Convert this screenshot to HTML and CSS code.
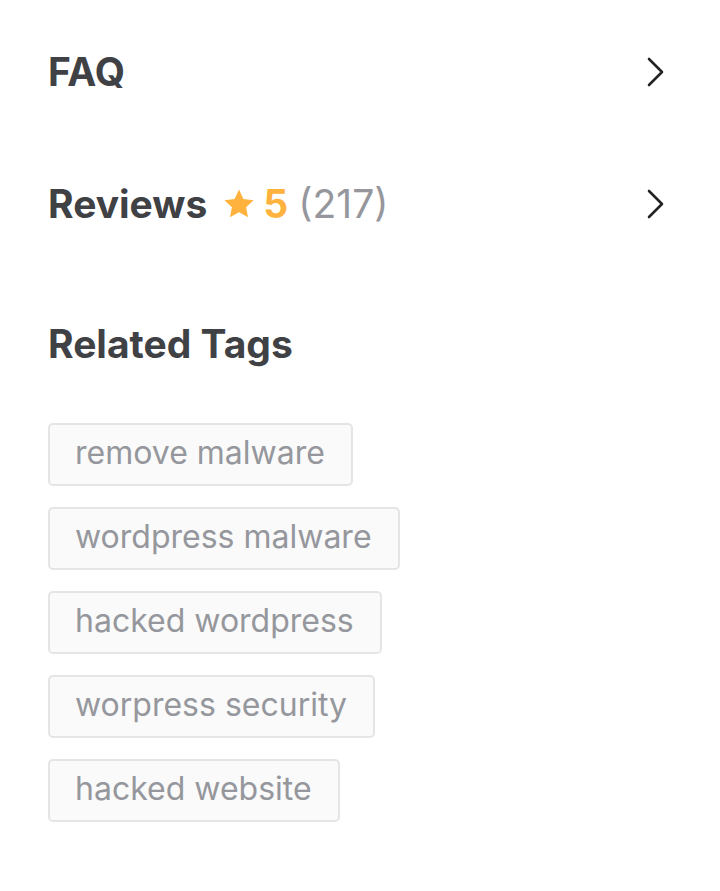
FILE: index.html
```html
<!DOCTYPE html>
<html>
<head>
<meta charset="utf-8">
<link rel="stylesheet" href="styles.css">
</head>
<body>
<div class="page">
  <div class="row">
    <h2 class="title">FAQ</h2>
    <svg class="chev" width="20" height="30" viewBox="0 0 20 30"><path d="M3 2 L16 15 L3 28" fill="none" stroke="#222325" stroke-width="2.6" stroke-linecap="round" stroke-linejoin="round"/></svg>
  </div>
  <div class="row row-reviews">
    <h2 class="title">Reviews
      <span class="rating">
        <svg class="star" width="34" height="34" viewBox="0 0 24 24"><path d="M12 1.8l3.1 6.6 7.2.9-5.3 5 1.4 7.1L12 17.9l-6.4 3.5 1.4-7.1-5.3-5 7.2-.9z" fill="#ffb33e"/></svg>
        <span class="score">5</span>
        <span class="count">(217)</span>
      </span>
    </h2>
    <svg class="chev" width="20" height="30" viewBox="0 0 20 30"><path d="M3 2 L16 15 L3 28" fill="none" stroke="#222325" stroke-width="2.6" stroke-linecap="round" stroke-linejoin="round"/></svg>
  </div>
  <h2 class="title tags-title">Related Tags</h2>
  <ul class="tags">
    <li class="tag">remove malware</li>
    <li class="tag">wordpress malware</li>
    <li class="tag">hacked wordpress</li>
    <li class="tag">worpress security</li>
    <li class="tag">hacked website</li>
  </ul>
</div>
</body>
</html>
```
FILE: styles.css
```css
html, body {
  margin: 0;
  padding: 0;
  background: #ffffff;
}
body {
  font-family: "Inter", "Liberation Sans", sans-serif;
  color: #404145;
}
.page {
  padding: 42px 54px 0 48px;
}
.row {
  display: flex;
  align-items: center;
  justify-content: space-between;
  height: 60px;
}
.row-reviews {
  margin-top: 72px;
}
.title {
  margin: 0;
  font-size: 39px;
  font-weight: 700;
  line-height: 40px;
  color: #404145;
  display: flex;
  align-items: center;
}
.rating {
  display: inline-flex;
  align-items: center;
  margin-left: 15px;
}
.star {
  margin-right: 7px;
}
.score {
  color: #ffb33e;
  font-weight: 700;
}
.count {
  color: #95979d;
  font-weight: 400;
  margin-left: 10px;
}
.chev {
  display: block;
}
.tags-title {
  margin-top: 90px;
}
.tags {
  list-style: none;
  margin: 59px 0 0 0;
  padding: 0;
  display: flex;
  flex-direction: column;
  align-items: flex-start;
  gap: 21px;
}
.tag {
  box-sizing: border-box;
  height: 63px;
  display: flex;
  align-items: center;
  padding: 0 26px 5px 25px;
  background: #fafafa;
  border: 2px solid #e4e5e7;
  border-radius: 5px;
  font-size: 32px;
  color: #95979d;
  font-weight: 400;
}
```
